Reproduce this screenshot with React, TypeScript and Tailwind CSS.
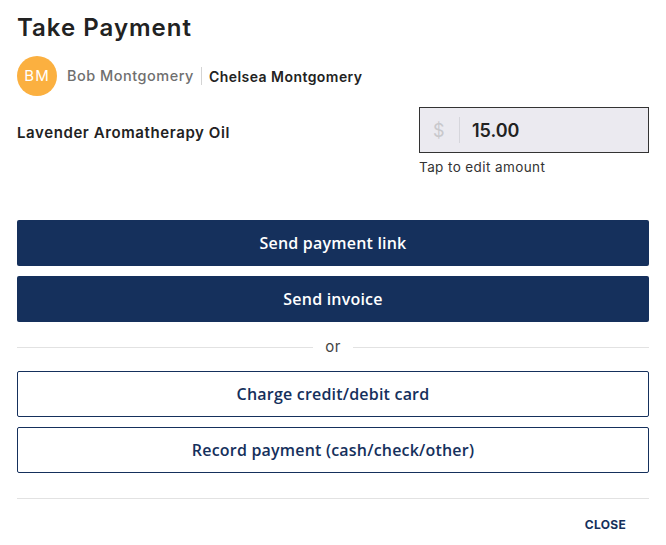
import React from "react";

const heading = { fontFamily: "Inter, 'Noto Sans', sans-serif" };
const btnFont = { fontFamily: "'Open Sans', sans-serif" };

export default function App() {
  return (
    <div className="w-[666px] h-[545px] bg-white px-[17px] pt-[12px] text-[#222]" style={heading}>
      <h1 className="text-[24px] leading-[32px] font-semibold tracking-[1px] text-[#222]">Take Payment</h1>

      <div className="mt-[12px] flex items-center">
        <div className="w-[40px] h-[40px] rounded-full bg-[#fbb040] flex items-center justify-center text-white text-[15px] tracking-[1px]">
          BM
        </div>
        <span className="ml-[10px] text-[14.5px] font-medium tracking-[0.5px] text-[#6f6f6f]">Bob Montgomery</span>
        <span className="mx-[7px] w-px h-[18px] bg-[#d4d4d4]" />
        <span className="text-[14px] font-semibold tracking-[0.45px] text-[#222]">Chelsea Montgomery</span>
      </div>

      <div className="mt-[11px] flex justify-between">
        <div className="pt-[15px] text-[15px] font-semibold tracking-[0.6px] text-[#222]">Lavender Aromatherapy Oil</div>
        <div className="w-[230px]">
          <div className="h-[46px] border border-[#333] bg-[#ebeaf0] flex items-center">
            <span className="w-[39px] pl-[13px] text-[18px] text-[#c8c8cc]">$</span>
            <span className="w-px h-[26px] bg-[#d6d6dc]" />
            <span className="ml-[12px] text-[18px] font-semibold text-[#222]">15.00</span>
          </div>
          <div className="mt-[4px] text-[13.5px] tracking-[0.4px] text-[#333]">Tap to edit amount</div>
        </div>
      </div>

      <div className="mt-[43px] flex flex-col gap-[10px]" style={btnFont}>
        <button className="h-[46px] w-full rounded-[2px] bg-[#15305c] text-white text-[16px] font-semibold tracking-[0.2px]">
          Send payment link
        </button>
        <button className="h-[46px] w-full rounded-[2px] bg-[#15305c] text-white text-[16px] font-semibold tracking-[0.2px]">
          Send invoice
        </button>
      </div>

      <div className="mt-[14px] flex items-center">
        <div className="flex-1 h-px bg-[#e2e2e2]" />
        <span className="px-[12px] text-[15px] text-[#444] leading-[22px] tracking-[0.5px]">or</span>
        <div className="flex-1 h-px bg-[#e2e2e2]" />
      </div>

      <div className="mt-[13px] flex flex-col gap-[10px]" style={btnFont}>
        <button className="h-[46px] w-full rounded-[2px] border border-[#15305c] bg-white text-[#15305c] text-[16px] font-semibold tracking-[0.2px]">
          Charge credit/debit card
        </button>
        <button className="h-[46px] w-full rounded-[2px] border border-[#15305c] bg-white text-[#15305c] text-[16px] font-semibold tracking-[0.2px]">
          Record payment (cash/check/other)
        </button>
      </div>

      <div className="mt-[25px] h-px bg-[#e2e2e2]" />

      <div className="mt-[17px] flex justify-end pr-[23px]">
        <span className="text-[12px] font-bold text-[#15305c] tracking-[0.3px]">CLOSE</span>
      </div>
    </div>
  );
}
